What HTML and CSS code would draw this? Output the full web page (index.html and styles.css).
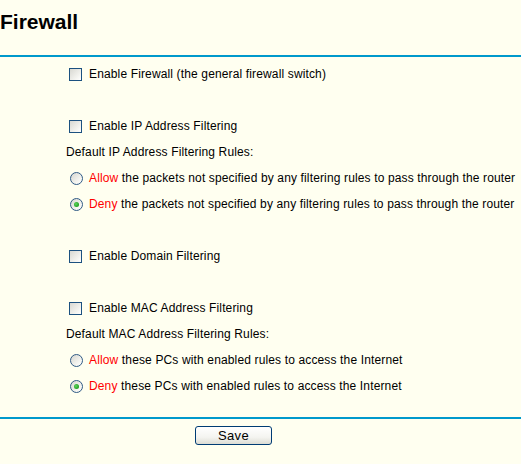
FILE: index.html
```html
<!DOCTYPE html>
<html>
<head>
<meta charset="utf-8">
<link rel="stylesheet" href="styles.css">
</head>
<body>
<h1 class="title">Firewall</h1>
<div class="rule"></div>
<div class="form">
  <label class="row check-row"><span class="checkbox"></span><span>Enable Firewall (the general firewall switch)</span></label>
  <div class="row"></div>
  <label class="row check-row"><span class="checkbox"></span><span>Enable IP Address Filtering</span></label>
  <div class="row caption">Default IP Address Filtering Rules:</div>
  <label class="row radio-row"><span class="radio"></span><span><span class="red">Allow</span> the packets not specified by any filtering rules to pass through the router</span></label>
  <label class="row radio-row"><span class="radio checked"></span><span><span class="red">Deny</span> the packets not specified by any filtering rules to pass through the router</span></label>
  <div class="row"></div>
  <label class="row check-row"><span class="checkbox"></span><span>Enable Domain Filtering</span></label>
  <div class="row"></div>
  <label class="row check-row"><span class="checkbox"></span><span>Enable MAC Address Filtering</span></label>
  <div class="row caption">Default MAC Address Filtering Rules:</div>
  <label class="row radio-row"><span class="radio"></span><span><span class="red">Allow</span> these PCs with enabled rules to access the Internet</span></label>
  <label class="row radio-row"><span class="radio checked"></span><span><span class="red">Deny</span> these PCs with enabled rules to access the Internet</span></label>
</div>
<div class="rule bottom"></div>
<div class="actions"><button class="btn">Save</button></div>
</body>
</html>
```
FILE: styles.css
```css
html, body {
  margin: 0;
  padding: 0;
  background: #fffff0;
  font-family: "Liberation Sans", Arial, sans-serif;
  font-size: 12px;
  color: #000;
}
.title {
  margin: 10px 0 0 0;
  height: 24px;
  line-height: 24px;
  font-size: 21px;
  font-weight: bold;
}
.rule {
  margin-top: 21px;
  height: 2px;
  background: #0099cc;
}
.form {
  padding-top: 4px;
  letter-spacing: 0.14px;
}
.row {
  height: 26px;
  display: flex;
  align-items: center;
  white-space: nowrap;
}
.check-row {
  padding-left: 69px;
}
.radio-row {
  padding-left: 70px;
}
.caption {
  padding-left: 66px;
}
.checkbox {
  width: 11px;
  height: 11px;
  border: 1px solid #1c5180;
  background: linear-gradient(135deg, #d8d8d2 0%, #f4f4f0 70%, #ffffff 100%);
  margin-right: 7px;
  flex: none;
}
.radio {
  width: 11px;
  height: 11px;
  border: 1px solid #2f5a85;
  border-radius: 50%;
  background: linear-gradient(135deg, #d6d6d0 0%, #f6f6f2 70%, #ffffff 100%);
  margin-right: 6px;
  flex: none;
  display: flex;
  align-items: center;
  justify-content: center;
}
.radio.checked::after {
  content: "";
  width: 5px;
  height: 5px;
  border-radius: 50%;
  background: radial-gradient(circle at 40% 40%, #5fd45f 0%, #21a121 70%);
}
.red {
  color: #ff0000;
}
.bottom {
  margin-top: 18px;
}
.actions {
  padding: 7px 0 0 195px;
}
.btn {
  width: 77px;
  height: 19px;
  padding: 0;
  border: 1px solid #003c74;
  border-radius: 3px;
  background: linear-gradient(#ffffff 0%, #f4f4f0 60%, #dcdcd4 100%);
  font-family: "Liberation Sans", Arial, sans-serif;
  font-size: 13px;
  letter-spacing: 0.3px;
  color: #000;
  line-height: 17px;
}
```
